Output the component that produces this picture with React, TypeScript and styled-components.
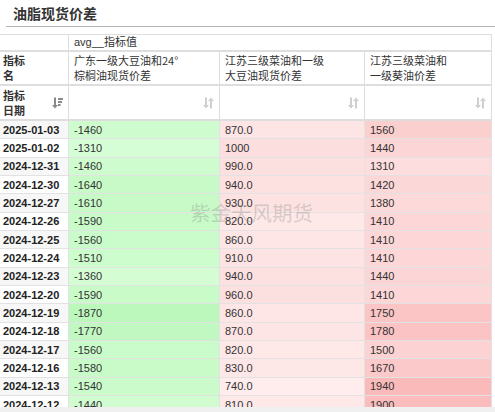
import React from "react";
import styled, { createGlobalStyle } from "styled-components";

const GlobalStyle = createGlobalStyle`
  html, body { margin: 0; padding: 0; background: #ffffff; }
  body { font-family: "Liberation Sans", Arial, "Noto Sans CJK SC", sans-serif; color: #333; }
  * { box-sizing: border-box; }
`;

const Page = styled.div`
  width: 495px;
  height: 412px;
  display: flex;
  flex-direction: column;
  overflow: hidden;
`;

const TitleBar = styled.div`
  margin-left: 6px;
  height: 27px;
  padding: 4px 0 0 7px;
  border-bottom: 1px solid #b4b4b4;
  font-family: "Noto Sans CJK SC", sans-serif;
  font-size: 14px;
  font-weight: 700;
  line-height: 18px;
  color: #333;
`;

const TableWrap = styled.div`
  position: relative;
  margin-top: 7px;
  width: 492px;
  height: 373px;
  overflow: hidden;
`;

const Grid = styled.div`
  display: grid;
  grid-template-columns: 69px 151px 145px 127px;
  border-top: 1px solid #dedede;
`;

const HeadCell = styled.div<{ $h: number; $span?: number; $last?: boolean }>`
  grid-column: span ${(p) => p.$span ?? 1};
  height: ${(p) => p.$h}px;
  border-bottom: 2px solid #dedede;
  border-right: ${(p) => (p.$last ? "1px solid #dedede" : "1px solid #dedede")};
  padding: 0 5px;
  display: flex;
  align-items: center;
  justify-content: space-between;
  font-family: "Noto Sans CJK SC", sans-serif;
  font-size: 11px;
  line-height: 15px;
  color: #333;
  background: #fff;
`;

const FirstHeadCell = styled(HeadCell)`
  padding: 0 5px 0 3px;
  font-weight: 700;
`;

const Lines = styled.div`
  display: flex;
  flex-direction: column;
`;

const AvgLabel = styled.span`
  font-family: "Liberation Sans", Arial, "Noto Sans CJK SC", sans-serif;
  font-size: 11px;
`;

const DataCell = styled.div<{ $bg: string }>`
  height: 18.33px;
  border-bottom: 1px solid #e2e2e2;
  border-right: 1px solid #e2e2e2;
  padding: 0 5px;
  display: flex;
  align-items: center;
  font-family: "Liberation Sans", Arial, sans-serif;
  font-size: 11px;
  color: #333;
  background: ${(p) => p.$bg};
  white-space: nowrap;
`;

const DateCell = styled(DataCell)`
  padding: 0 3px;
  font-weight: 700;
  color: #222;
`;

const Watermark = styled.div`
  position: absolute;
  left: 190px;
  top: 166px;
  font-family: "Noto Sans CJK SC", sans-serif;
  font-size: 20.5px;
  line-height: 24px;
  color: rgba(120, 120, 120, 0.28);
  letter-spacing: 0;
  pointer-events: none;
  white-space: nowrap;
`;

const ScrollTrack = styled.div`
  height: 5px;
  background: #f0f0f0;
`;

const IconBox = styled.svg`
  flex: none;
  display: block;
`;

const SortBoth = () => (
  <IconBox width="11" height="12" viewBox="0 0 11 12">
    <g fill="#cfcfcf">
      <rect x="2" y="0.5" width="2" height="9" />
      <polygon points="0,8 6,8 3,11.5" />
      <rect x="7" y="2.5" width="2" height="9" />
      <polygon points="5,4 11,4 8,0.5" />
    </g>
  </IconBox>
);

const SortDesc = () => (
  <IconBox width="11" height="12" viewBox="0 0 11 12">
    <g fill="#8a8a8a">
      <rect x="2" y="0.5" width="2" height="9" />
      <polygon points="0,8 6,8 3,11.5" />
      <rect x="6" y="1" width="5" height="2" />
      <rect x="6" y="4" width="4" height="2" />
      <rect x="6" y="7" width="2.5" height="2" />
    </g>
  </IconBox>
);

type Row = [string, number, string, number];

const rows: Row[] = [
  ["2025-01-03", -1460, "870.0", 1560],
  ["2025-01-02", -1310, "1000", 1440],
  ["2024-12-31", -1460, "990.0", 1310],
  ["2024-12-30", -1640, "940.0", 1420],
  ["2024-12-27", -1610, "930.0", 1380],
  ["2024-12-26", -1590, "820.0", 1410],
  ["2024-12-25", -1560, "860.0", 1410],
  ["2024-12-24", -1510, "910.0", 1410],
  ["2024-12-23", -1360, "940.0", 1440],
  ["2024-12-20", -1590, "960.0", 1410],
  ["2024-12-19", -1870, "860.0", 1750],
  ["2024-12-18", -1770, "870.0", 1780],
  ["2024-12-17", -1560, "820.0", 1500],
  ["2024-12-16", -1580, "830.0", 1670],
  ["2024-12-13", -1540, "740.0", 1940],
  ["2024-12-12", -1440, "810.0", 1900],
];

const mix = (a: number[], b: number[], t: number) =>
  `rgb(${a.map((v, i) => Math.round(v + (b[i] - v) * t)).join(",")})`;

const scale = (v: number, lo: number, hi: number) => (v - lo) / (hi - lo);

export default function App() {
  return (
    <Page>
      <GlobalStyle />
      <TitleBar>油脂现货价差</TitleBar>
      <TableWrap>
        <Grid>
          <FirstHeadCell $h={17} />
          <HeadCell $h={17} $span={3}>
            <AvgLabel>avg__指标值</AvgLabel>
          </HeadCell>

          <FirstHeadCell $h={34}>
            <Lines>
              <span>指标</span>
              <span>名</span>
            </Lines>
          </FirstHeadCell>
          <HeadCell $h={34}>
            <Lines>
              <span>广东一级大豆油和24°</span>
              <span>棕榈油现货价差</span>
            </Lines>
          </HeadCell>
          <HeadCell $h={34}>
            <Lines>
              <span>江苏三级菜油和一级</span>
              <span>大豆油现货价差</span>
            </Lines>
          </HeadCell>
          <HeadCell $h={34}>
            <Lines>
              <span>江苏三级菜油和</span>
              <span>一级葵油价差</span>
            </Lines>
          </HeadCell>

          <FirstHeadCell $h={35}>
            <Lines>
              <span>指标</span>
              <span>日期</span>
            </Lines>
            <SortDesc />
          </FirstHeadCell>
          <HeadCell $h={35}>
            <span />
            <SortBoth />
          </HeadCell>
          <HeadCell $h={35}>
            <span />
            <SortBoth />
          </HeadCell>
          <HeadCell $h={35}>
            <span />
            <SortBoth />
          </HeadCell>

          {rows.map(([date, a, b, c], i) => {
            const g = mix([214, 254, 214], [188, 247, 188], scale(-a, 1310, 1870));
            const p = mix([255, 236, 236], [252, 222, 222], scale(parseFloat(b), 740, 1000));
            const r = mix([253, 221, 221], [250, 186, 186], scale(c, 1310, 1940));
            return (
              <React.Fragment key={date}>
                <DateCell $bg={i % 2 === 0 ? "#f7f7f7" : "#ffffff"}>{date}</DateCell>
                <DataCell $bg={g}>{a}</DataCell>
                <DataCell $bg={p}>{b}</DataCell>
                <DataCell $bg={r}>{c}</DataCell>
              </React.Fragment>
            );
          })}
        </Grid>
        <Watermark>紫金天风期货</Watermark>
      </TableWrap>
      <ScrollTrack />
    </Page>
  );
}
